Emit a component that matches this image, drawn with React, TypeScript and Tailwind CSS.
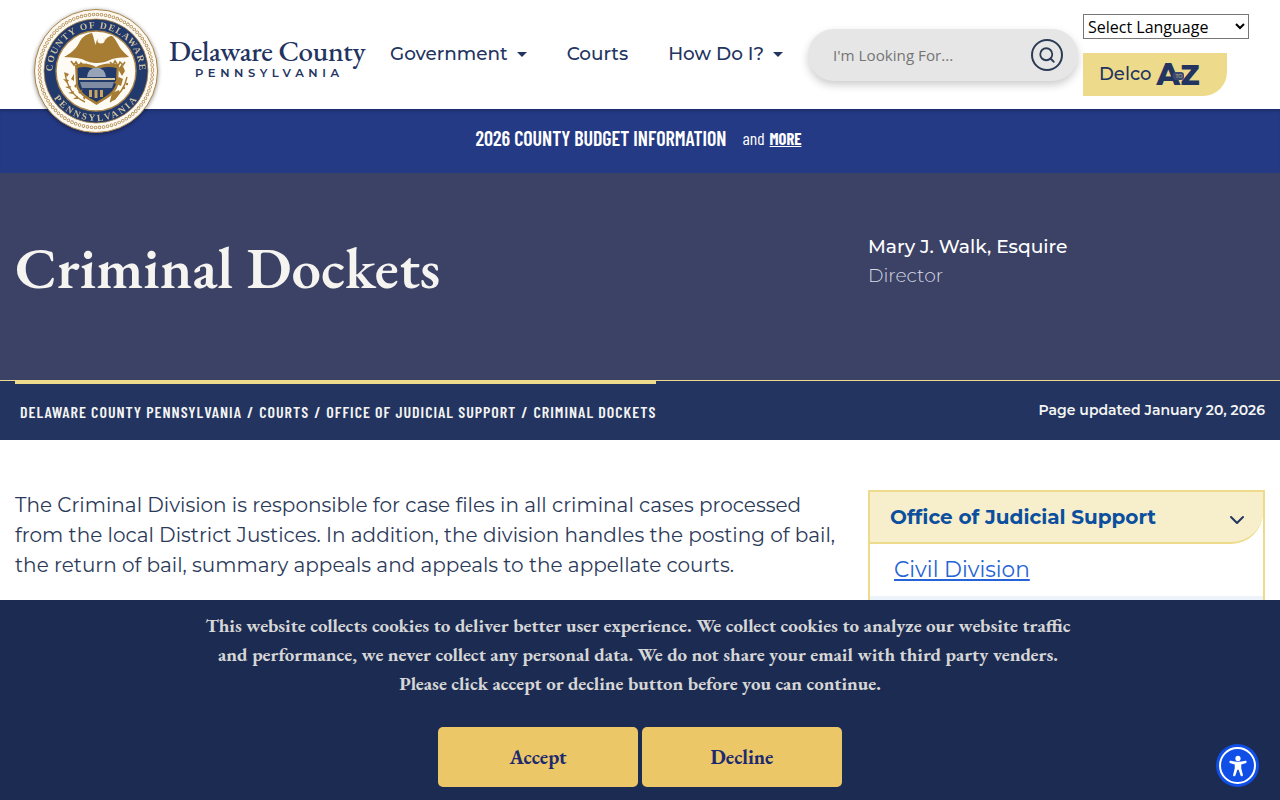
import React from 'react';
import { ChevronDown, Search } from 'lucide-react';

const sans = 'font-["Montserrat","Inter","Noto_Sans",sans-serif]';

const Seal = () => (
  <svg viewBox="0 0 124 124" className="w-[124px] h-[124px] drop-shadow-[0_1px_2px_rgba(0,0,0,0.45)]">
    <defs>
      <path id="sealTop" d="M 19.5 72 A 43.5 43.5 0 1 1 104.5 72" />
      <path id="sealBottom" d="M 14 76 A 50 50 0 0 0 110 76" />
    </defs>
    <circle cx="62" cy="62" r="61.5" fill="#fdf9f0" stroke="#a9844a" strokeWidth="1" />
    <circle cx="62" cy="62" r="56.5" fill="none" stroke="#b08d55" strokeWidth="3.6" strokeDasharray="0 4.05" strokeLinecap="round" />
    <circle cx="62" cy="62" r="56.5" fill="none" stroke="#fdf9f0" strokeWidth="2" strokeDasharray="0 4.05" strokeLinecap="round" />
    <circle cx="62" cy="62" r="52" fill="#22396b" stroke="#a9844a" strokeWidth="0.8" />
    <circle cx="62" cy="62" r="40" fill="#fdfbf4" stroke="#a9844a" strokeWidth="1.4" />
    <text fill="#cdbf9f" fontSize="9.5" fontWeight="bold" letterSpacing="1.3" fontFamily="'Liberation Serif', serif">
      <textPath href="#sealTop" startOffset="50%" textAnchor="middle">COUNTY OF DELAWARE</textPath>
    </text>
    <text fill="#cdbf9f" fontSize="9.5" fontWeight="bold" letterSpacing="2.2" fontFamily="'Liberation Serif', serif">
      <textPath href="#sealBottom" startOffset="50%" textAnchor="middle">PENNSYLVANIA</textPath>
    </text>
    {/* eagle */}
    <path d="M30 48 C37 44 42 40 45 34 C48 28 52 25 58 24 C60 28 60 33 62 36 C62 31 64 28 68 28 C72 29 70 33 69 35 C70 32 74 26 78 27 C82 30 84 36 87 40 C89 43 92 45 95 48 C88 49 82 48 76 51 C72 53 68 54 63 54 C57 54 54 53 50 51 C44 48 37 49 30 48 Z" fill="#a77c33" />
    <circle cx="67" cy="31" r="3.6" fill="#fdfbf4" />
    <path d="M37 52 l3 4 l2 -3 l3 5 l2 -4 l3 4 l3 -3 M76 53 l3 3 l2 -4 l3 5 l2 -4 l3 3 l2 -3" fill="none" stroke="#a77c33" strokeWidth="1.6" />
    {/* shield */}
    <path d="M41 56 C50 53 56 55 62 58 C68 55 75 53 85 56 L84 76 C82 85 72 90 62.5 96 C53 90 43 85 42 76 Z" fill="#a77c33" />
    <path d="M43.5 59 C50 57 56 58 62 60.5 C68 58 75 57 82.5 59 L82 75 C80 83 71 88 62.5 93 C54 88 45 83 44 75 Z" fill="#22396b" />
    <path d="M53 68 A9.5 9.5 0 0 1 72 68 Z" fill="#97a3b6" />
    <path d="M45 69 H81 V71 H45 Z" fill="#d7c9a4" />
    <path d="M46 73 H80 L78 79 H48 Z" fill="#7e8ba3" />
    <path d="M55 81 h3 v7 h-3 Z M60.5 81 h3 v8 h-3 Z M66 81 h3 v7 h-3 Z" fill="#c9a45d" />
    {/* branches */}
    <path d="M31 64 C33 78 40 88 51 93" fill="none" stroke="#a77c33" strokeWidth="1.4" />
    <path d="M33 68 l-3 -5 l5 2 Z M33 74 l-4 -4 l6 1 Z M36 80 l-5 -2 l6 -1 Z M39 85 l-5 -1 l6 -2 Z M44 90 l-5 0 l5 -3 Z M37 70 l3 -5 l0 7 Z M40 77 l4 -4 l-2 6 Z M44 83 l5 -3 l-3 5 Z M49 88 l4 -1 l-3 4 Z" fill="#a77c33" />
    <path d="M84 60 l4 -5 l3 7 l-3 5 Z M80 74 l5 -6 l4 2 l-2 7 Z M76 92 l2 -8 l7 -3 l1 3 l-5 7 Z" fill="#a77c33" />
    <path d="M93 68 C91 78 86 86 76 93" fill="none" stroke="#a77c33" strokeWidth="1.4" />
    <circle cx="93" cy="75" r="1.2" fill="#a77c33" />
    <circle cx="90" cy="79" r="1.2" fill="#a77c33" />
  </svg>
);

const AZ = () => (
  <span className="relative block h-[24px] w-[42px]">
    <span className="font-extrabold text-[30px] leading-[24px] text-[#22345f] absolute -left-[1px] top-0">A</span>
    <span className="font-extrabold text-[28px] leading-[24px] text-[#22345f] absolute left-[23px] top-0">Z</span>
    <span className="absolute left-[16px] top-[9px] w-[11px] h-[8px] rounded-[3px] bg-[#3a4a70] text-[5px] leading-[8px] text-center text-[#eddb8b]">TO</span>
  </span>
);

const Crumb = () => <span className="mx-[5px]">/</span>;

export default function App() {
  return (
    <div className={`relative bg-white min-h-[800px] h-[800px] overflow-hidden ${sans}`}>
      <header className="flex h-[109px] bg-white">
        <div className="w-[169px] shrink-0" />
        <div className="flex flex-col w-[200px] pt-[38px] shrink-0">
          <span className="font-['EB_Garamond','Liberation_Serif',serif] font-medium text-[29px] leading-[26px] text-[#22345f] tracking-[-0.35px] whitespace-nowrap">Delaware County</span>
          <span className="mt-[3px] text-[11.5px] leading-[12px] tracking-[4.6px] pl-[26px] font-semibold text-[#22345f] whitespace-nowrap">PENNSYLVANIA</span>
        </div>
        <nav className="flex gap-10 pt-[42px] pl-[21px] text-[18.4px] leading-6 font-medium text-[#22345f] w-[439px] shrink-0 whitespace-nowrap">
          <span className="flex items-center h-6">Government<i className="ml-[9px] w-0 h-0 border-x-[5px] border-x-transparent border-t-[5px] border-t-[#22345f]" /></span>
          <span className="h-6">Courts</span>
          <span className="flex items-center h-6">How Do I?<i className="ml-[9px] w-0 h-0 border-x-[5px] border-x-transparent border-t-[5px] border-t-[#22345f]" /></span>
        </nav>
        <div className="pt-[29px] shrink-0">
          <div className="flex items-center justify-between w-[270px] h-[52px] rounded-[26px] bg-[#e6e6e6] shadow-[0_4px_8px_rgba(0,0,0,0.2)] pl-[25px] pr-[15px]">
            <span className="font-['Open_Sans',sans-serif] text-[15.2px] pt-[1px] text-[#757575]">I'm Looking For...</span>
            <span className="flex items-center justify-center w-[32px] h-[32px] rounded-full border-2 border-[#2b3a55] text-[#2b3a55]">
              <Search size={18} strokeWidth={2.4} />
            </span>
          </div>
        </div>
        <div className="pl-[5px] pt-[14px] shrink-0">
          <select className="block w-[166px] h-[25px] border border-[#767676] bg-white text-[16px] font-['Open_Sans',sans-serif] text-black rounded-none">
            <option>Select Language</option>
          </select>
          <div className="flex items-center gap-[6px] w-[144px] h-[43px] mt-[14px] pl-4 bg-[#eddb8b] rounded-br-[24px]">
            <span className="text-[18px] font-medium text-[#22345f]">Delco</span>
            <AZ />
          </div>
        </div>
      </header>

      <div className="absolute left-[34px] top-[9px] z-10">
        <Seal />
      </div>

      <div className="flex items-center justify-center h-[64px] pb-[7px] pr-[3px] bg-[#253a85] text-white shadow-[inset_0_4px_4px_-3px_rgba(0,0,0,0.3)] font-['Barlow_Condensed','Liberation_Sans',sans-serif]">
        <span className="font-semibold text-[20px]">2026 COUNTY BUDGET INFORMATION</span>
        <span className="ml-4 pt-[2px] text-[17.5px]">and</span>
        <span className="ml-[5px] pt-[2px] font-bold text-[16.5px] underline">MORE</span>
      </div>

      <section className="flex h-[207px] bg-[#3b4266] pl-[15px]">
        <h1 className="w-[853px] pt-[59px] font-['EB_Garamond','Liberation_Serif',serif] font-semibold text-[59px] leading-[72px] text-[#f6f4f0]">Criminal Dockets</h1>
        <div className="pt-[59px] text-[18.7px] leading-[29px]">
          <div className="font-medium text-white">Mary J. Walk, Esquire</div>
          <div className="text-[#d9dae3] font-light">Director</div>
        </div>
      </section>

      <div className="relative flex justify-between h-[60px] bg-[#22345f] border-t border-[#eddb8b] pl-5 pr-[15px] pt-[22px]">
        <i className="absolute left-[15px] -top-px w-[641px] h-1 bg-[#eddb8b]" />
        <div className="font-['Barlow_Condensed','Bebas_Neue','Liberation_Sans',sans-serif] font-semibold text-[16px] leading-[18px] tracking-[1px] text-[#f4f4f4] whitespace-nowrap">
          DELAWARE COUNTY PENNSYLVANIA<Crumb />COURTS<Crumb />OFFICE OF JUDICIAL SUPPORT<Crumb />CRIMINAL DOCKETS
        </div>
        <div className="-mt-px text-[14px] leading-[16px] font-semibold text-[#f4f4f4]">Page updated January 20, 2026</div>
      </div>

      <main className="flex pl-[15px] pr-[15px] pt-[50px]">
        <p className="w-[853px] pr-4 pt-0 text-[20px] leading-[30px] text-[#2c3a5a]">
          The Criminal Division is responsible for case files in all criminal cases processed from the local District Justices. In addition, the division handles the posting of bail, the return of bail, summary appeals and appeals to the appellate courts.
        </p>
        <aside className="w-[397px] h-[200px] border-2 border-[#eddb8b]">
          <div className="relative flex items-center h-[52px] pl-5 bg-[#f7efcb] border-b-2 border-[#eddb8b] rounded-br-[32px]">
            <span className="text-[20px] font-bold text-[#0b4f9e]">Office of Judicial Support</span>
            <ChevronDown size={24} strokeWidth={2} className="absolute right-[14px] top-[16px] text-[#22345f]" />
          </div>
          <div className="pl-6 pt-[11px] text-[21.6px] leading-[28px] text-[#2563d6] underline">Civil Division</div>
          <div className="mt-[13px] h-10 bg-[#edf3fb]" />
        </aside>
      </main>

      <div className="fixed left-0 right-0 bottom-0 z-20 h-[200px] bg-[#1b2b52] flex flex-col items-center pt-[12px]">
        <div className="w-[900px] text-center font-['EB_Garamond','Liberation_Serif',serif] font-bold text-[19px] leading-[28.8px] text-[#d6d6d6]">
          <div className="pr-1">This website collects cookies to deliver better user experience. We collect cookies to analyze our website traffic</div>
          <div className="pr-1">and performance, we never collect any personal data. We do not share your email with third party venders.</div>
          <div>Please click accept or decline button before you can continue.</div>
        </div>
        <div className="flex gap-1 mt-[28.6px]">
          <button className="w-[200px] h-[60px] rounded-[5px] bg-[#ebc768] font-['EB_Garamond','Liberation_Serif',serif] font-bold text-[20px] text-[#1e2a6d]">Accept</button>
          <button className="w-[200px] h-[60px] rounded-[5px] bg-[#ebc768] font-['EB_Garamond','Liberation_Serif',serif] font-bold text-[20px] text-[#1e2a6d]">Decline</button>
        </div>
      </div>

      <div className="fixed right-[21px] bottom-[13px] z-30 flex items-center justify-center w-[43px] h-[43px] rounded-full bg-[#0f4fe8]">
        <span className="flex items-center justify-center w-[37px] h-[37px] rounded-full border-2 border-white">
          <svg viewBox="0 0 24 24" className="w-[26px] h-[26px]" fill="#fff">
            <circle cx="12" cy="5" r="2.4" />
            <path d="M4 8.2 C4 7.4 4.8 7 5.5 7.2 C9.5 8.3 14.5 8.3 18.5 7.2 C19.2 7 20 7.4 20 8.2 C20 8.8 19.6 9.2 19 9.4 L15 10.5 V14 L16.5 20 C16.7 20.8 16.3 21.4 15.6 21.5 C15 21.6 14.5 21.2 14.3 20.6 L12.6 15.5 H11.4 L9.7 20.6 C9.5 21.2 9 21.6 8.4 21.5 C7.7 21.4 7.3 20.8 7.5 20 L9 14 V10.5 L5 9.4 C4.4 9.2 4 8.8 4 8.2 Z" />
          </svg>
        </span>
      </div>
    </div>
  );
}
